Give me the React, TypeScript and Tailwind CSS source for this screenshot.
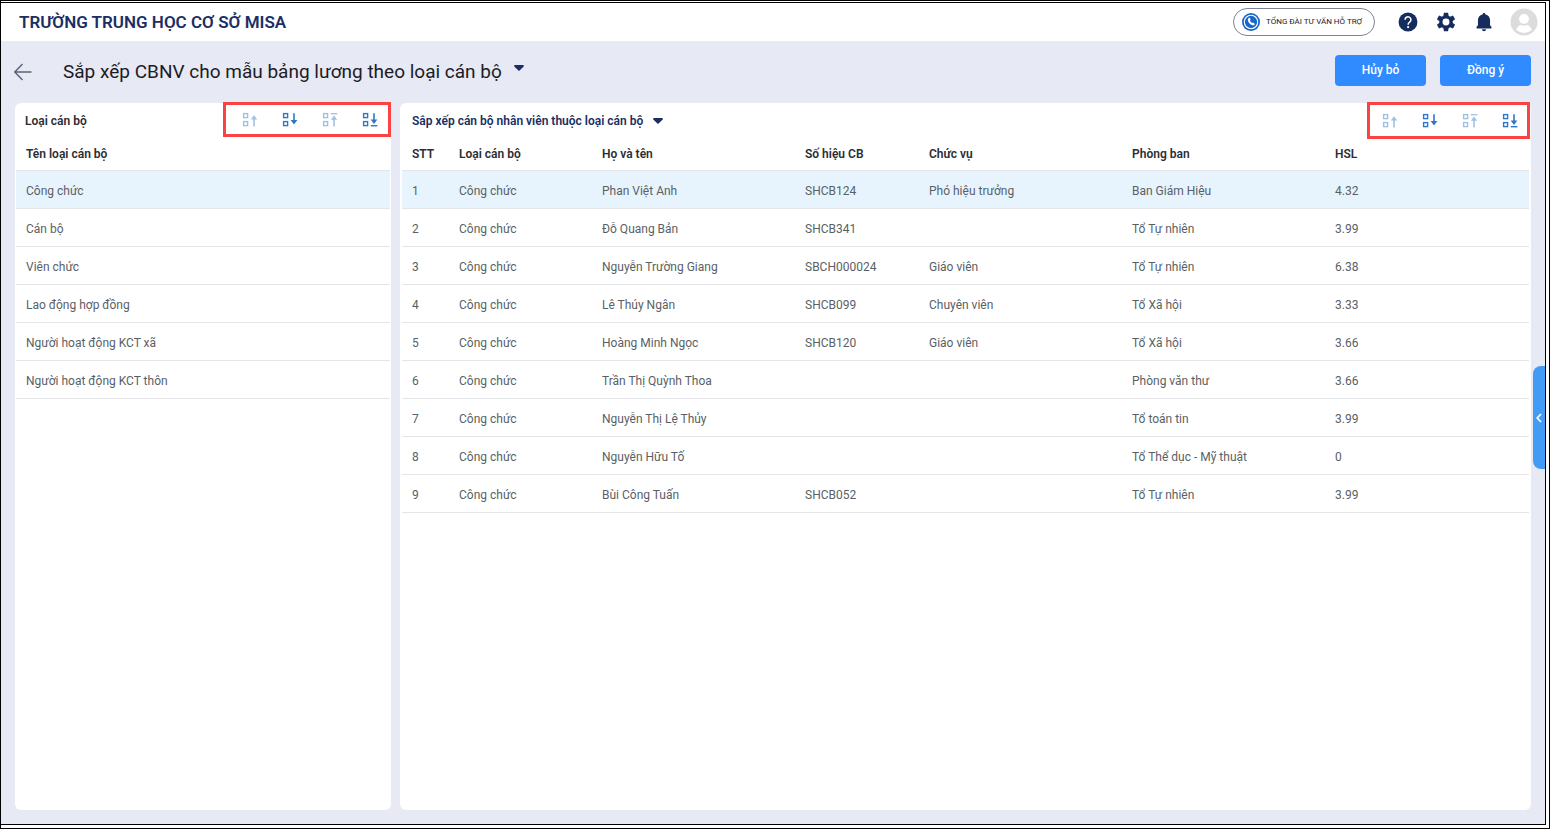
import { useState } from 'react';
import clsx from 'clsx';

type Direction = 'up' | 'down' | 'top' | 'bottom';

interface Employee {
    type: string;
    name: string;
    code: string;
    position: string;
    department: string;
    salary: string;
}

const staffTypes = [
    'Công chức',
    'Cán bộ',
    'Viên chức',
    'Lao động hợp đồng',
    'Người hoạt động KCT xã',
    'Người hoạt động KCT thôn',
];

const initialEmployees: Employee[] = [
    { type: 'Công chức', name: 'Phan Việt Anh', code: 'SHCB124', position: 'Phó hiệu trưởng', department: 'Ban Giám Hiệu', salary: '4.32' },
    { type: 'Công chức', name: 'Đỗ Quang Bản', code: 'SHCB341', position: '', department: 'Tổ Tự nhiên', salary: '3.99' },
    { type: 'Công chức', name: 'Nguyễn Trường Giang', code: 'SBCH000024', position: 'Giáo viên', department: 'Tổ Tự nhiên', salary: '6.38' },
    { type: 'Công chức', name: 'Lê Thúy Ngân', code: 'SHCB099', position: 'Chuyên viên', department: 'Tổ Xã hội', salary: '3.33' },
    { type: 'Công chức', name: 'Hoàng Minh Ngọc', code: 'SHCB120', position: 'Giáo viên', department: 'Tổ Xã hội', salary: '3.66' },
    { type: 'Công chức', name: 'Trần Thị Quỳnh Thoa', code: '', position: '', department: 'Phòng văn thư', salary: '3.66' },
    { type: 'Công chức', name: 'Nguyễn Thị Lệ Thủy', code: '', position: '', department: 'Tổ toán tin', salary: '3.99' },
    { type: 'Công chức', name: 'Nguyễn Hữu Tố', code: '', position: '', department: 'Tổ Thể dục - Mỹ thuật', salary: '0' },
    { type: 'Công chức', name: 'Bùi Công Tuấn', code: 'SHCB052', position: '', department: 'Tổ Tự nhiên', salary: '3.99' },
];

const directions: { id: Direction; label: string }[] = [
    { id: 'up', label: 'Lên' },
    { id: 'down', label: 'Xuống' },
    { id: 'top', label: 'Lên đầu' },
    { id: 'bottom', label: 'Xuống cuối' },
];

function moveItem<T>(items: T[], index: number, direction: Direction) {
    const target = {
        up: Math.max(index - 1, 0),
        down: Math.min(index + 1, items.length - 1),
        top: 0,
        bottom: items.length - 1,
    }[direction];
    const next = [...items];
    const [item] = next.splice(index, 1);
    next.splice(target, 0, item);
    return { next, target };
}

function MoveIcon({ direction }: { direction: Direction }) {
    return (
        <svg width="16" height="16" viewBox="0 0 16 16" fill="none" stroke="#2f75c8">
            <rect x="1.6" y="1.6" width="4" height="4" strokeWidth="1.4" />
            <rect x="1.6" y="9.6" width="4" height="4" strokeWidth="1.4" />
            {direction === 'up' && (
                <>
                    <path d="M12 6v8.400" strokeWidth="1.6" />
                    <path d="M12 3.300L8.800 7.500h6.400z" fill="#2f75c8" stroke="none" />
                </>
            )}
            {direction === 'down' && (
                <>
                    <path d="M12 1.200v7.500" strokeWidth="1.6" />
                    <path d="M12 12.400L8.600 8.100h6.800z" fill="#2f75c8" stroke="none" />
                </>
            )}
            {direction === 'top' && (
                <>
                    <path d="M8.800 1.700h6.600" strokeWidth="1.3" />
                    <path d="M12 7v7.400" strokeWidth="1.6" />
                    <path d="M12 3.600L8.800 7.800h6.400z" fill="#2f75c8" stroke="none" />
                </>
            )}
            {direction === 'bottom' && (
                <>
                    <path d="M8.800 13.700h6.600" strokeWidth="1.4" />
                    <path d="M12 1.200v7" strokeWidth="1.6" />
                    <path d="M12 11.900L8.600 7.600h6.800z" fill="#2f75c8" stroke="none" />
                </>
            )}
        </svg>
    );
}

interface MoveToolbarProps {
    index: number;
    count: number;
    onMove: (direction: Direction) => void;
    className?: string;
}

function MoveToolbar({ index, count, onMove, className }: MoveToolbarProps) {
    return (
        <div className={clsx('-mt-px flex gap-6 border-[3px] border-[#fa4343]', className)}>
            {directions.map(({ id, label }) => {
                const disabled = id === 'up' || id === 'top' ? index === 0 : index === count - 1;
                return (
                    <button
                        key={id}
                        type="button"
                        aria-label={label}
                        disabled={disabled}
                        onClick={() => onMove(id)}
                        className="disabled:opacity-45"
                    >
                        <MoveIcon direction={id} />
                    </button>
                );
            })}
        </div>
    );
}

function Caret() {
    return (
        <svg width="10" height="6" viewBox="0 0 10 6" fill="#1a2e63">
            <path d="M1 0h8a1 1 0 0 1 .7 1.6L5.6 5.6a1 1 0 0 1-1.2 0L.3 1.6A1 1 0 0 1 1 0z" />
        </svg>
    );
}

function HotlineIcon() {
    return (
        <svg width="18" height="18" viewBox="0 0 18 18">
            <circle cx="9" cy="9" r="9" fill="#1767c8" />
            <circle cx="9" cy="9" r="6.7" fill="none" stroke="#fff" strokeWidth="1.1" />
            <path
                d="M6.4 5.2l1-.6 1.3 2-.8.9c.4 1 1.2 1.9 2.2 2.5l1-.6 1.8 1.5-.7 1c-.6.6-1.5.6-2.4.1-1.900-1-3.300-2.700-3.900-4.600-.2-.9 0-1.700.5-2.200z"
                fill="#fff"
            />
        </svg>
    );
}

function HelpIcon() {
    return (
        <svg width="22" height="22" viewBox="0 0 24 24">
            <circle cx="12" cy="12" r="10.300" fill="#152c5e" />
            <path d="M8.800 9.600a3.200 3.200 0 1 1 5 2.600c-1.200.8-1.700 1.300-1.700 2.700" fill="none" stroke="#fff" strokeWidth="1.700" />
            <circle cx="12.100" cy="17.500" r="1.200" fill="#fff" />
        </svg>
    );
}

function GearIcon() {
    return (
        <svg width="22" height="22" viewBox="0 0 24 24" fill="#152c5e">
            <circle cx="12" cy="12" r="5.600" fill="none" stroke="#152c5e" strokeWidth="3.600" />
            {[0, 60, 120, 180, 240, 300].map((angle) => (
                <path key={angle} d="M9.700 1.900h4.600l.6 4h-5.800z" transform={`rotate(${angle} 12 12)`} />
            ))}
        </svg>
    );
}

function BellIcon() {
    return (
        <svg width="22" height="22" viewBox="0 0 24 24" fill="#152c5e">
            <path d="M12 2.200c1 0 1.600.7 1.600 1.600 3.200.7 5 3.300 5 6.400v5.300l1.500 1.700v1.900H3.900v-1.900l1.500-1.700v-5.300c0-3.100 1.800-5.700 5-6.400 0-.9.600-1.600 1.600-1.600zM9.800 20h4.400a2.200 2.200 0 0 1-4.400 0z" />
        </svg>
    );
}

function AvatarIcon() {
    return (
        <svg width="28" height="28" viewBox="0 0 28 28">
            <circle cx="14" cy="14" r="13.500" fill="#dcdcdc" />
            <circle cx="14" cy="11" r="5" fill="#fff" />
            <path d="M6.300 21.600c1-3 3.200-4.600 4.900-4.600 1.700 1 3.900 1 5.600 0 1.700 0 3.900 1.600 4.900 4.600-2 2.200-4.600 3.300-7.700 3.300s-5.700-1.100-7.700-3.300z" fill="#fff" />
        </svg>
    );
}

export default function App() {
    const [types, setTypes] = useState(staffTypes);
    const [selectedType, setSelectedType] = useState(0);
    const [employees, setEmployees] = useState(initialEmployees);
    const [selectedEmployee, setSelectedEmployee] = useState(0);

    const moveType = (direction: Direction) => {
        const { next, target } = moveItem(types, selectedType, direction);
        setTypes(next);
        setSelectedType(target);
    };

    const moveEmployee = (direction: Direction) => {
        const { next, target } = moveItem(employees, selectedEmployee, direction);
        setEmployees(next);
        setSelectedEmployee(target);
    };

    return (
        <div className="flex min-h-screen flex-col border border-black bg-white pt-px pr-[3px] pb-[3px] font-['Roboto',sans-serif] text-xs text-[#5a5f66]">
            <div className="relative flex flex-1 flex-col border-t border-r border-b border-black bg-[#e7e9f5]">
                <header className="flex h-[38px] items-center justify-between bg-white pr-[7px] pl-[18px]">
                    <span className="text-[17px] font-semibold text-[#1a2e63]">TRƯỜNG TRUNG HỌC CƠ SỞ MISA</span>
                    <div className="flex items-center">
                        <button
                            type="button"
                            className="mr-[22px] flex h-7 w-[142px] items-center gap-1.5 rounded-full border border-[#7d8296] px-2 text-[8px] whitespace-nowrap text-[#222]"
                        >
                            <HotlineIcon />
                            TỔNG ĐÀI TƯ VẤN HỖ TRỢ
                        </button>
                        <button type="button" aria-label="Trợ giúp" className="mr-4">
                            <HelpIcon />
                        </button>
                        <button type="button" aria-label="Thiết lập" className="mr-4">
                            <GearIcon />
                        </button>
                        <button type="button" aria-label="Thông báo" className="mr-[15px]">
                            <BellIcon />
                        </button>
                        <button type="button" aria-label="Tài khoản">
                            <AvatarIcon />
                        </button>
                    </div>
                </header>

                <div className="flex h-[62px] items-center justify-between px-[13px] pr-[14px]">
                    <div className="flex items-center">
                        <button type="button" aria-label="Quay lại">
                            <svg width="18" height="18" viewBox="0 0 18 18" fill="none" stroke="#5b6275" strokeWidth="1.400">
                                <path d="M17.500 9H.8M8.500 1L.8 9l7.700 8" />
                            </svg>
                        </button>
                        <button type="button" className="ml-[31px] flex items-center gap-3 text-[19px] text-[#1c1c24]">
                            Sắp xếp CBNV cho mẫu bảng lương theo loại cán bộ
                            <span className="mb-2">
                                <Caret />
                            </span>
                        </button>
                    </div>
                    <div className="flex gap-[14px] pb-1">
                        <button type="button" className="h-[31px] w-[91px] rounded bg-[#2f8bff] text-xs font-medium text-white">
                            Hủy bỏ
                        </button>
                        <button type="button" className="h-[31px] w-[91px] rounded bg-[#2f8bff] text-xs font-medium text-white">
                            Đồng ý
                        </button>
                    </div>
                </div>

                <main className="flex flex-1 gap-[9px] px-[14px] pb-[14px]">
                    <section className="w-[376px] shrink-0 rounded-md bg-white">
                        <div className="flex h-9 items-start justify-between pl-2.5">
                            <h2 className="leading-9 font-semibold text-[#2b2d33]">Loại cán bộ</h2>
                            <MoveToolbar
                                index={selectedType}
                                count={types.length}
                                onMove={moveType}
                                className="h-[35px] pr-2.5 pl-4"
                            />
                        </div>
                        <div className="px-px">
                            <table className="w-full text-left">
                                <thead>
                                    <tr className="h-[31px] border-b border-[#e3e5e8] text-[#2b2d33]">
                                        <th className="px-2.5 font-semibold">Tên loại cán bộ</th>
                                    </tr>
                                </thead>
                                <tbody>
                                    {types.map((type, i) => (
                                        <tr
                                            key={type}
                                            onClick={() => setSelectedType(i)}
                                            className={clsx('h-[38px] border-b border-[#e3e5e8]', i === selectedType && 'bg-[#e7f4fe]')}
                                        >
                                            <td className="px-2.5 pt-1">{type}</td>
                                        </tr>
                                    ))}
                                </tbody>
                            </table>
                        </div>
                    </section>

                    <section className="min-w-0 flex-1 rounded-md bg-white">
                        <div className="flex h-9 items-start justify-between pr-px pl-3">
                            <button type="button" className="flex h-9 items-center gap-2.5 font-semibold text-[#1a2e63]">
                                Sắp xếp cán bộ nhân viên thuộc loại cán bộ
                                <Caret />
                            </button>
                            <MoveToolbar
                                index={selectedEmployee}
                                count={employees.length}
                                onMove={moveEmployee}
                                className="h-[37px] pr-[9px] pl-3"
                            />
                        </div>
                        <div className="px-0.5">
                            <table className="w-full table-fixed text-left">
                                <colgroup>
                                    <col className="w-[47px]" />
                                    <col className="w-[143px]" />
                                    <col className="w-[203px]" />
                                    <col className="w-[124px]" />
                                    <col className="w-[203px]" />
                                    <col className="w-[203px]" />
                                    <col />
                                </colgroup>
                                <thead>
                                    <tr className="h-[31px] border-b border-[#e3e5e8] text-[#2b2d33]">
                                        <th className="pl-2.5 font-semibold">STT</th>
                                        <th className="px-2.5 font-semibold">Loại cán bộ</th>
                                        <th className="px-2.5 font-semibold">Họ và tên</th>
                                        <th className="px-2.5 font-semibold">Số hiệu CB</th>
                                        <th className="px-2.5 font-semibold">Chức vụ</th>
                                        <th className="px-2.5 font-semibold">Phòng ban</th>
                                        <th className="px-2.5 font-semibold">HSL</th>
                                    </tr>
                                </thead>
                                <tbody>
                                    {employees.map((employee, i) => (
                                        <tr
                                            key={employee.name}
                                            onClick={() => setSelectedEmployee(i)}
                                            className={clsx('h-[38px] border-b border-[#e3e5e8]', i === selectedEmployee && 'bg-[#e7f4fe]')}
                                        >
                                            <td className="px-2.5 pt-1">{i + 1}</td>
                                            <td className="px-2.5 pt-1">{employee.type}</td>
                                            <td className="px-2.5 pt-1">{employee.name}</td>
                                            <td className="px-2.5 pt-1">{employee.code}</td>
                                            <td className="px-2.5 pt-1">{employee.position}</td>
                                            <td className="px-2.5 pt-1">{employee.department}</td>
                                            <td className="px-2.5 pt-1">{employee.salary}</td>
                                        </tr>
                                    ))}
                                </tbody>
                            </table>
                        </div>
                    </section>
                </main>

                {/* drawer handle on the right edge */}
                <button
                    type="button"
                    aria-label="Mở rộng"
                    className="absolute top-[363px] right-0 flex h-[103px] w-3 items-center justify-center rounded-l-lg bg-[#429cf5]"
                >
                    <svg width="6" height="10" viewBox="0 0 6 10" fill="none" stroke="#fff" strokeWidth="1.800">
                        <path d="M5 1L1.200 5 5 9" />
                    </svg>
                </button>
            </div>
        </div>
    );
}
